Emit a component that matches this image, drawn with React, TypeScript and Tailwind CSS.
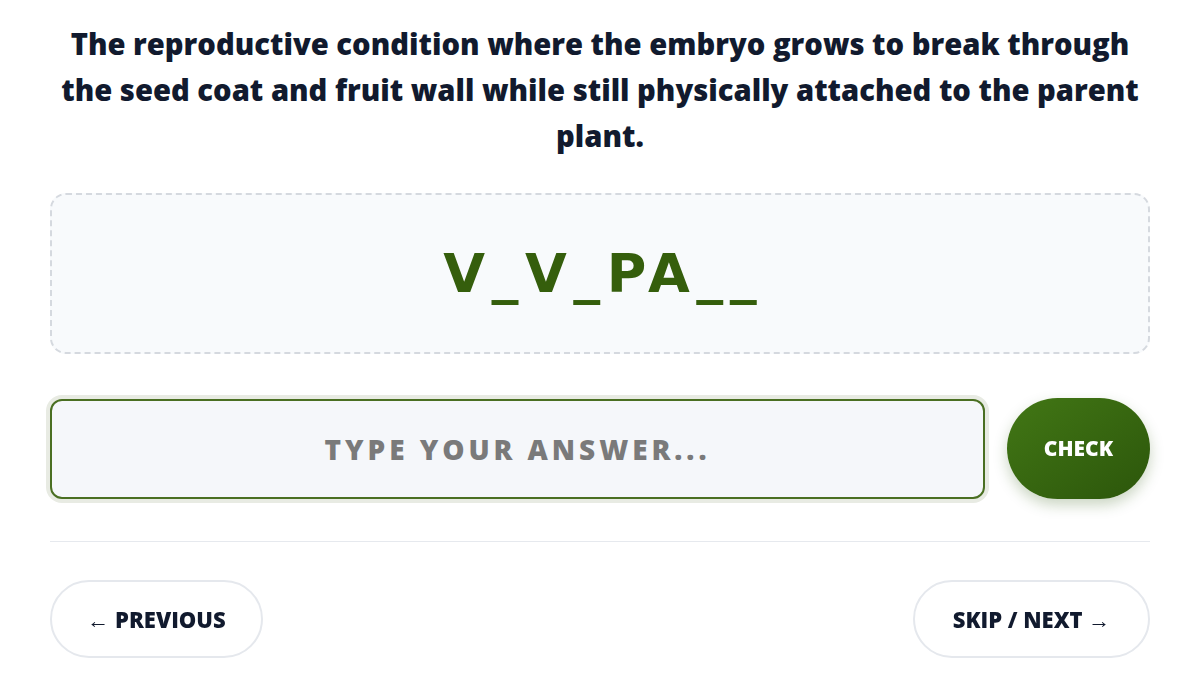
import React from "react";

export default function App() {
  return (
    <div
      className="min-h-screen bg-white flex flex-col items-center"
      style={{ fontFamily: '"Open Sans", "Noto Sans", sans-serif' }}
    >
      <div className="w-[1100px] flex flex-col pt-[21px]">
        <h1 className="text-center text-[29.2px] leading-[46px] font-extrabold text-[#111a2e]">
          The reproductive condition where the embryo grows to break through the seed coat and fruit wall while still physically attached to the parent plant.
        </h1>

        <div className="mt-[34px] h-[161px] rounded-2xl border-2 border-dashed border-[#d5d9df] bg-[#f8fafc] flex items-center justify-center">
          <span
            className="text-[54px] font-bold tracking-[0.12em] text-[#355e0c] pl-[0.12em]"
            style={{ fontFamily: '"DejaVu Sans", sans-serif' }}
          >
            V_V_PA__
          </span>
        </div>

        <div className="mt-[44px] flex items-center gap-[22px]">
          <input
            autoFocus
            placeholder="TYPE YOUR ANSWER..."
            className="flex-1 h-[100px] rounded-xl border-2 border-[#4a6f22] bg-[#f5f7fa] text-center text-[28px] font-extrabold tracking-[0.14em] uppercase text-[#333] placeholder:text-[#7a7a7a] outline-none ring-4 ring-[#e8ebe3] caret-black"
          />
          <button className="w-[143px] h-[101px] rounded-full bg-gradient-to-br from-[#427715] to-[#2c560b] text-white text-[21px] font-extrabold shadow-[0_6px_14px_rgba(45,86,11,0.25)]">
            CHECK
          </button>
        </div>

        <div className="mt-[42px] h-px bg-[#e6e9ee]" />

        <div className="mt-[38px] flex justify-between">
          <button className="h-[78px] w-[213px] rounded-full border-2 border-[#e5e8ed] bg-white text-[22px] font-extrabold text-[#111a2e]">
            <span className="font-normal">←</span> PREVIOUS
          </button>
          <button className="h-[78px] w-[237px] rounded-full border-2 border-[#e5e8ed] bg-white text-[22px] font-extrabold text-[#111a2e]">
            SKIP / NEXT <span className="font-normal">→</span>
          </button>
        </div>
      </div>
    </div>
  );
}
